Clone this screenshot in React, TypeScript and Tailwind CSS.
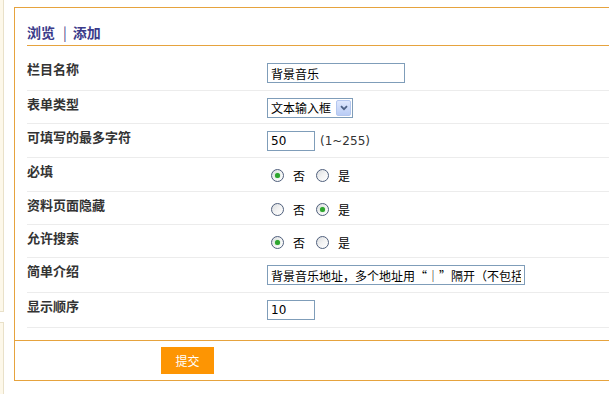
import React from "react";

const CJK = { fontFamily: '"Noto Sans CJK SC", "DejaVu Sans", sans-serif' };

function Radio({ checked }: { checked?: boolean }) {
  return (
    <span className="relative inline-flex h-[13px] w-[13px] items-center justify-center rounded-full border border-[#4f5f7c] bg-gradient-to-br from-[#d9dcdf] via-[#f3f3f3] to-white">
      {checked && <span className="h-[5px] w-[5px] rounded-full bg-[#2fa42f] shadow-[0_0_1px_#5fd05f]" />}
    </span>
  );
}

function RadioGroup({ yes }: { yes?: boolean }) {
  return (
    <div className="mt-[11px] flex h-[13px] items-center pl-[4px] text-[12px] leading-[13px] text-black" style={CJK}>
      <Radio checked={!yes} />
      <span className="ml-[9px]">否</span>
      <span className="ml-[11px] inline-flex">
        <Radio checked={yes} />
      </span>
      <span className="ml-[9px]">是</span>
    </div>
  );
}

function Label({ children }: { children: React.ReactNode }) {
  return (
    <div className="w-[240px] shrink-0 pt-[5px] text-[13px] font-bold leading-[16px] text-[#333]" style={CJK}>
      {children}
    </div>
  );
}

function Row({ label, h, children }: { label: string; h: string; children: React.ReactNode }) {
  return (
    <div className={`flex border-b border-[#ececec] ${h}`}>
      <Label>{label}</Label>
      <div className="pt-[7px]">{children}</div>
    </div>
  );
}

function RadioRow({ label, h, yes }: { label: string; h: string; yes?: boolean }) {
  return (
    <div className={`flex items-start border-b border-[#ececec] ${h}`}>
      <Label>{label}</Label>
      <RadioGroup yes={yes} />
    </div>
  );
}

const inputCls =
  "block h-[20px] border border-[#7f9db9] bg-white px-[3px] text-[12px] text-black outline-none";

export default function App() {
  return (
    <div className="flex h-[394px] w-[609px] overflow-hidden bg-white" style={{ fontFamily: '"DejaVu Sans", "Noto Sans CJK SC", sans-serif' }}>
      <div className="flex w-[4px] shrink-0 flex-col">
        <div className="h-[312px] border-b border-r border-[#e9e1c9] bg-[#fdf8ea]" />
        <div className="mt-[10px] flex-1 border-r border-t border-[#e9e1c9] bg-[#fdf8ea]" />
      </div>
      <div className="ml-[10px] mt-[7px] h-[374px] w-[640px] shrink-0 border-b border-l border-t border-[#e6a33e]">
        <div className="pl-[12px]">
          <div className="flex h-[38px] items-start border-b border-[#e6a33e] pt-[16px] text-[14px] font-bold leading-[16px] text-[#3b3b8a]" style={CJK}>
            <span>浏览</span>
            <span className="ml-[8px] mr-[6px] font-normal text-[#4a3a8a]">|</span>
            <span>添加</span>
          </div>
        </div>
        <div className="mb-[12px] mt-[10px] pl-[12px]">
          <Row label="栏目名称" h="h-[35px]">
            <input readOnly defaultValue="背景音乐" className={`${inputCls} w-[138px]`} style={CJK} />
          </Row>
          <Row label="表单类型" h="h-[33px]">
            <div className="flex h-[20px] w-[86px] items-center border border-[#7f9db9] bg-white text-[12px] text-black" style={CJK}>
              <span className="pl-[3px]">文本输入框</span>
              <span className="ml-auto mr-[1px] flex h-[16px] w-[15px] items-center justify-center rounded-[2px] border border-[#b4c7ef] bg-gradient-to-b from-[#dfe8fd] to-[#b9ccf5]">
                <svg width="8" height="6" viewBox="0 0 8 6">
                  <path d="M1 1.2 L4 4.2 L7 1.2" stroke="#4d6185" strokeWidth="1.8" fill="none" />
                </svg>
              </span>
            </div>
          </Row>
          <Row label="可填写的最多字符" h="h-[34px]">
            <div className="flex items-center">
              <input readOnly defaultValue="50" className={`${inputCls} w-[48px]`} />
              <span className="ml-[5px] text-[12px] text-[#333]">(1~255)</span>
            </div>
          </Row>
          <RadioRow label="必填" h="h-[34px]" />
          <RadioRow label="资料页面隐藏" h="h-[33px]" yes />
          <RadioRow label="允许搜索" h="h-[33px]" />
          <Row label="简单介绍" h="h-[35px]">
            <input
              readOnly
              defaultValue="背景音乐地址，多个地址用“｜”隔开（不包括http://）"
              className={`${inputCls} w-[258px]`}
              style={CJK}
            />
          </Row>
          <Row label="显示顺序" h="h-[35px]">
            <input readOnly defaultValue="10" className={`${inputCls} w-[48px]`} />
          </Row>
        </div>
        <div className="h-[40px] border-t border-[#e6a33e] pt-[6px]">
          <button className="ml-[146px] flex h-[27px] w-[53px] items-center justify-center bg-[#fd9503] text-[12px] text-white" style={CJK}>
            提交
          </button>
        </div>
      </div>
    </div>
  );
}
